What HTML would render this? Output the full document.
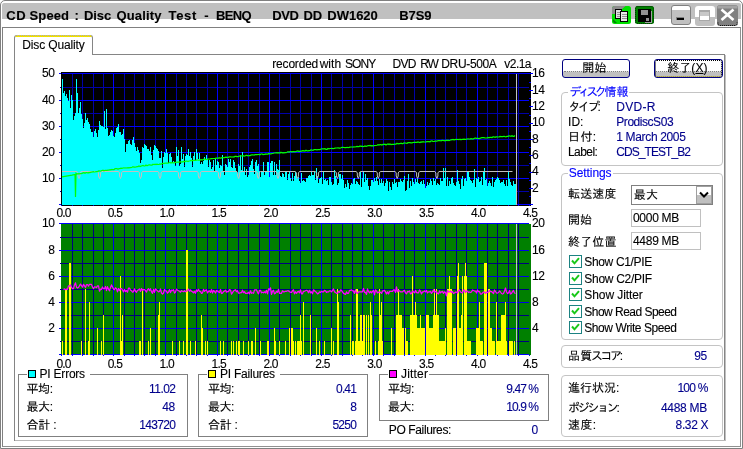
<!DOCTYPE html>
<html lang="ja"><head><meta charset="utf-8"><title>CD Speed : Disc Quality Test</title>
<style>
html,body{margin:0;padding:0;background:#fff;}
body{width:743px;height:449px;position:relative;overflow:hidden;font-family:"Liberation Sans","IPAGothic","Noto Sans CJK JP",sans-serif;font-size:12px;}
.t{position:absolute;white-space:pre;line-height:16px;font-size:12px;-webkit-text-stroke:0.12px currentColor;}
.b{position:absolute;box-sizing:border-box;}
.tx{position:absolute;left:0;top:0;width:743px;height:449px;will-change:transform;}
.ch{position:absolute;left:0;top:0;}
.gb{position:absolute;box-sizing:border-box;border:1px solid #c4c4c4;border-radius:4px;}
.gs{position:absolute;box-sizing:border-box;border:1px solid #808080;}
.lg{position:absolute;background:#fff;height:3px;}
.ed{position:absolute;box-sizing:border-box;border:1px solid #c8c8c8;border-top-color:#b0b0b0;border-left-color:#b0b0b0;background:#fff;}
.cb{position:absolute;box-sizing:border-box;width:13px;height:13px;border:1px solid #1c8a8a;background:#fff;}
</style></head>
<body>
<div class="b" style="left:0px;top:0px;width:743px;height:449px;border:1px solid #808080;border-radius:5px 5px 0 0;"></div>
<div class="b" style="left:2px;top:3px;width:739px;height:16px;background:#c0c0c0;border-radius:2px 2px 0 0;"></div>
<div class="b" style="left:2px;top:27px;width:739px;height:420px;border:1px solid #808080;border-right-color:#909090;border-bottom-color:#909090;"></div>
<svg class="ch" style="left:611px;top:5px" width="44" height="20" viewBox="0 0 44 20"><rect x="1" y="1" width="19" height="18" rx="2.5" fill="#00e000"/><path d="M1,3.5a2.500,2.500 0 0 1 2.500,-2.500h11l-9,8h-4.500z" fill="#8c8c8c"/><path d="M2,14l4,4h-2a2,2 0 0 1 -2,-2z" fill="#008000"/><rect x="4.500" y="4.500" width="6" height="9" fill="#e0e0e0" stroke="#000" stroke-width="1"/><rect x="9.500" y="6.500" width="7" height="10" fill="#e8e8e8" stroke="#000" stroke-width="1"/><path d="M6,7.500h3M6,9.500h3M6,11.500h3M11,9.500h5M11,11.500h5M11,13.500h5" stroke="#909090" stroke-width="1" fill="none"/><rect x="24" y="1" width="19" height="18" rx="2.500" fill="#008000"/><rect x="24.500" y="1.500" width="18" height="17" rx="2" fill="none" stroke="#003000" stroke-width="1" stroke-dasharray="1,1"/><rect x="27" y="4" width="13" height="13" fill="#000"/><rect x="30" y="5" width="7" height="5" fill="#909090"/><rect x="35" y="13" width="3" height="3" fill="#909090"/><rect x="40" y="6" width="1" height="12" fill="#a0a0a0"/><rect x="34" y="17" width="7" height="1" fill="#a0a0a0"/></svg>
<div class="b" style="left:671px;top:5px;width:20px;height:20px;border:1px solid #808080;border-radius:3px;background:linear-gradient(#fff 0,#fff 4px,#c0c0c0 4px,#c0c0c0 100%);"></div>
<div class="b" style="left:676px;top:17px;width:8px;height:3px;background:#000;border-top:1px solid #808080;border-left:1px solid #808080;"></div>
<div class="b" style="left:695px;top:6px;width:20px;height:20px;border-radius:3px;background:linear-gradient(#fff 0,#fff 11px,#c0c0c0 11px,#c0c0c0 100%);"></div>
<div class="b" style="left:699px;top:10px;width:11px;height:11px;border:1px solid #a8a8a8;border-top:2px solid #a8a8a8;background:linear-gradient(#c8c8c8 0,#c8c8c8 4px,#fff 4px,#fff 100%);"></div>
<svg class="ch" style="left:717px;top:5px" width="21" height="21" viewBox="0 0 21 21"><rect x="0" y="0" width="21" height="21" rx="3" fill="#808080"/><path d="M2,0.500h17a2,2 0 0 1 1.500,1.500v1.500h-20v-1.500a2,2 0 0 1 1.500,-1.500z" fill="#a4a4a4"/><path d="M4.500,4.500L16.500,15M16.500,4.500L4.500,15" stroke="#fff" stroke-width="2.600" fill="none"/><path d="M1,17.500v1a2,2 0 0 0 2,2h15a2,2 0 0 0 2,-2v-1" stroke="#000" stroke-width="1" stroke-dasharray="1,1" fill="none"/></svg>
<div class="b" style="left:14px;top:54px;width:711px;height:387px;border:1px solid #858585;"></div>
<div class="b" style="left:15px;top:440px;width:711px;height:1px;background:#b8b8b8;"></div>
<div class="b" style="left:725px;top:55px;width:1px;height:386px;background:#c0c0c0;"></div>
<div class="b" style="left:14px;top:35px;width:79px;height:20px;border:1px solid #858585;border-bottom:none;border-radius:3px 3px 0 0;background:#fff;"></div>
<div class="b" style="left:15px;top:35px;width:77px;height:2px;background:#f0e000;border-radius:3px 3px 0 0;border-top:1px dotted #a8a8c0;"></div>
<div class="b" style="left:562px;top:59px;width:68px;height:19px;border:1px solid #000080;border-radius:3px;background:linear-gradient(#fff 0,#fff 11px,#c0c0c0 12px,#c0c0c0 100%);"></div>
<div class="b" style="left:564px;top:71px;width:64px;height:1px;border-top:1px dotted #808080;"></div>
<div class="b" style="left:654px;top:59px;width:69px;height:19px;border:1px solid #000080;border-radius:3px;background:linear-gradient(#fff 0,#fff 11px,#c0c0c0 12px,#c0c0c0 100%);"></div>
<div class="b" style="left:656px;top:71px;width:65px;height:1px;border-top:1px dotted #808080;"></div>
<div class="b" style="left:655px;top:60px;width:67px;height:17px;border:1px dotted #000;border-bottom-color:#a09000;border-radius:2px;"></div>
<div class="gb" style="left:561px;top:92px;width:162px;height:74px;"></div>
<div class="lg" style="left:568px;top:91px;width:61px;"></div>
<div class="gb" style="left:561px;top:173px;width:162px;height:167px;"></div>
<div class="lg" style="left:568px;top:172px;width:45px;"></div>
<div class="gb" style="left:561px;top:345px;width:162px;height:23px;"></div>
<div class="gb" style="left:561px;top:375px;width:162px;height:62px;"></div>
<div class="b" style="left:631px;top:185px;width:82px;height:20px;border:1px solid #808080;background:#fff;"></div>
<div class="b" style="left:696px;top:186px;width:16px;height:18px;border:1px solid #a0a0a0;background:linear-gradient(#fff 0,#fff 8px,#c0c0c0 8px,#c0c0c0 100%);"></div>
<svg class="ch" style="left:699px;top:191px" width="10" height="8" viewBox="0 0 10 8"><path d="M1,1.500L5,5.500L9,1.500" stroke="#000" stroke-width="2" fill="none"/></svg>
<div class="b" style="left:631px;top:209px;width:70px;height:18px;border:1px solid #c0c0c0;background:#fff;"></div>
<div class="b" style="left:631px;top:232px;width:70px;height:18px;border:1px solid #c0c0c0;background:#fff;"></div>
<div class="b" style="left:569px;top:255px;width:13px;height:13px;border:1px solid #1c8282;background:#fff;"></div>
<svg class="ch" style="left:571px;top:257px" width="9" height="9" viewBox="0 0 9 9"><path d="M1,3.500L3.500,6.300L8,1.200" stroke="#18c818" stroke-width="2" fill="none"/></svg>
<div class="b" style="left:569px;top:272px;width:13px;height:13px;border:1px solid #1c8282;background:#fff;"></div>
<svg class="ch" style="left:571px;top:274px" width="9" height="9" viewBox="0 0 9 9"><path d="M1,3.500L3.500,6.300L8,1.200" stroke="#18c818" stroke-width="2" fill="none"/></svg>
<div class="b" style="left:569px;top:288px;width:13px;height:13px;border:1px solid #1c8282;background:#fff;"></div>
<svg class="ch" style="left:571px;top:290px" width="9" height="9" viewBox="0 0 9 9"><path d="M1,3.500L3.500,6.300L8,1.200" stroke="#18c818" stroke-width="2" fill="none"/></svg>
<div class="b" style="left:569px;top:305px;width:13px;height:13px;border:1px solid #1c8282;background:#fff;"></div>
<svg class="ch" style="left:571px;top:307px" width="9" height="9" viewBox="0 0 9 9"><path d="M1,3.500L3.500,6.300L8,1.200" stroke="#18c818" stroke-width="2" fill="none"/></svg>
<div class="b" style="left:569px;top:321px;width:13px;height:13px;border:1px solid #1c8282;background:#fff;"></div>
<svg class="ch" style="left:571px;top:323px" width="9" height="9" viewBox="0 0 9 9"><path d="M1,3.500L3.500,6.300L8,1.200" stroke="#18c818" stroke-width="2" fill="none"/></svg>
<div class="gs" style="left:18px;top:374px;width:170px;height:63px;"></div>
<div class="lg" style="left:27px;top:373px;width:63px;"></div>
<div class="gs" style="left:198px;top:374px;width:170px;height:63px;"></div>
<div class="lg" style="left:207px;top:373px;width:73px;"></div>
<div class="gs" style="left:379px;top:374px;width:170px;height:47px;"></div>
<div class="lg" style="left:388px;top:373px;width:41px;"></div>
<div class="b" style="left:28px;top:370px;width:8px;height:8px;border:1px solid #000;background:#00ffff;"></div>
<div class="b" style="left:208px;top:370px;width:8px;height:8px;border:1px solid #000;background:#ffff00;"></div>
<div class="b" style="left:389px;top:370px;width:8px;height:8px;border:1px solid #000;background:#ff00ff;"></div>
<svg class="ch" width="743" height="449" viewBox="0 0 743 449" shape-rendering="crispEdges">
<rect x="61" y="72" width="470" height="134" fill="#000"/>
<rect x="72" y="74" width="1" height="131" fill="#0000a8"/>
<rect x="82" y="74" width="1" height="131" fill="#0000a8"/>
<rect x="93" y="74" width="1" height="131" fill="#0000a8"/>
<rect x="103" y="74" width="1" height="131" fill="#0000a8"/>
<rect x="124" y="74" width="1" height="131" fill="#0000a8"/>
<rect x="134" y="74" width="1" height="131" fill="#0000a8"/>
<rect x="144" y="74" width="1" height="131" fill="#0000a8"/>
<rect x="155" y="74" width="1" height="131" fill="#0000a8"/>
<rect x="176" y="74" width="1" height="131" fill="#0000a8"/>
<rect x="186" y="74" width="1" height="131" fill="#0000a8"/>
<rect x="196" y="74" width="1" height="131" fill="#0000a8"/>
<rect x="207" y="74" width="1" height="131" fill="#0000a8"/>
<rect x="227" y="74" width="1" height="131" fill="#0000a8"/>
<rect x="238" y="74" width="1" height="131" fill="#0000a8"/>
<rect x="248" y="74" width="1" height="131" fill="#0000a8"/>
<rect x="259" y="74" width="1" height="131" fill="#0000a8"/>
<rect x="279" y="74" width="1" height="131" fill="#0000a8"/>
<rect x="290" y="74" width="1" height="131" fill="#0000a8"/>
<rect x="300" y="74" width="1" height="131" fill="#0000a8"/>
<rect x="311" y="74" width="1" height="131" fill="#0000a8"/>
<rect x="331" y="74" width="1" height="131" fill="#0000a8"/>
<rect x="342" y="74" width="1" height="131" fill="#0000a8"/>
<rect x="352" y="74" width="1" height="131" fill="#0000a8"/>
<rect x="362" y="74" width="1" height="131" fill="#0000a8"/>
<rect x="383" y="74" width="1" height="131" fill="#0000a8"/>
<rect x="394" y="74" width="1" height="131" fill="#0000a8"/>
<rect x="404" y="74" width="1" height="131" fill="#0000a8"/>
<rect x="414" y="74" width="1" height="131" fill="#0000a8"/>
<rect x="435" y="74" width="1" height="131" fill="#0000a8"/>
<rect x="445" y="74" width="1" height="131" fill="#0000a8"/>
<rect x="456" y="74" width="1" height="131" fill="#0000a8"/>
<rect x="466" y="74" width="1" height="131" fill="#0000a8"/>
<rect x="487" y="74" width="1" height="131" fill="#0000a8"/>
<rect x="497" y="74" width="1" height="131" fill="#0000a8"/>
<rect x="508" y="74" width="1" height="131" fill="#0000a8"/>
<rect x="518" y="74" width="1" height="131" fill="#0000a8"/>
<rect x="60" y="191" width="469" height="1" fill="#0000a8"/>
<rect x="60" y="165" width="469" height="1" fill="#0000a8"/>
<rect x="60" y="139" width="469" height="1" fill="#0000a8"/>
<rect x="60" y="113" width="469" height="1" fill="#0000a8"/>
<rect x="60" y="87" width="469" height="1" fill="#0000a8"/>
<rect x="113" y="74" width="1" height="131" fill="#0000ff"/>
<rect x="165" y="74" width="1" height="131" fill="#0000ff"/>
<rect x="217" y="74" width="1" height="131" fill="#0000ff"/>
<rect x="269" y="74" width="1" height="131" fill="#0000ff"/>
<rect x="321" y="74" width="1" height="131" fill="#0000ff"/>
<rect x="373" y="74" width="1" height="131" fill="#0000ff"/>
<rect x="425" y="74" width="1" height="131" fill="#0000ff"/>
<rect x="477" y="74" width="1" height="131" fill="#0000ff"/>
<rect x="59" y="178" width="470" height="1" fill="#0000ff"/>
<rect x="59" y="152" width="470" height="1" fill="#0000ff"/>
<rect x="59" y="126" width="470" height="1" fill="#0000ff"/>
<rect x="59" y="100" width="470" height="1" fill="#0000ff"/>
<rect x="59" y="73" width="474" height="1" fill="#0000ff"/>
<rect x="59" y="204" width="474" height="1" fill="#0000ff"/>
<rect x="529" y="204" width="4" height="1" fill="#0000ff"/>
<rect x="529" y="196" width="2" height="1" fill="#0000ff"/>
<rect x="529" y="188" width="4" height="1" fill="#0000ff"/>
<rect x="529" y="180" width="2" height="1" fill="#0000ff"/>
<rect x="529" y="172" width="4" height="1" fill="#0000ff"/>
<rect x="529" y="163" width="2" height="1" fill="#0000ff"/>
<rect x="529" y="155" width="4" height="1" fill="#0000ff"/>
<rect x="529" y="147" width="2" height="1" fill="#0000ff"/>
<rect x="529" y="139" width="4" height="1" fill="#0000ff"/>
<rect x="529" y="131" width="2" height="1" fill="#0000ff"/>
<rect x="529" y="123" width="4" height="1" fill="#0000ff"/>
<rect x="529" y="115" width="2" height="1" fill="#0000ff"/>
<rect x="529" y="106" width="4" height="1" fill="#0000ff"/>
<rect x="529" y="98" width="2" height="1" fill="#0000ff"/>
<rect x="529" y="90" width="4" height="1" fill="#0000ff"/>
<rect x="529" y="82" width="2" height="1" fill="#0000ff"/>
<path d="M62,205V79h1V93h1V91h1V96h1V94h1V98h1V101h1V90h1V108h1V95h1V100h1V120h1V116h1V113h1V79h1V93h1V113h1V108h1V102h1V114h1V119h1V128h1V123h1V113h1V120h1V118h1V122h1V124h1V129h1V132h1V132h1V137h1V131h1V129h1V133h1V137h1V130h1V121h1V125h1V126h1V126h1V127h1V111h1V129h1V109h1V128h1V136h1V135h1V132h1V130h1V131h1V136h1V137h1V133h1V128h1V127h1V124h1V132h1V132h1V135h1V134h1V129h1V139h1V152h1V144h1V144h1V141h1V140h1V144h1V145h1V140h1V137h1V143h1V147h1V151h1V147h1V150h1V153h1V163h1V160h1V147h1V148h1V144h1V145h1V146h1V149h1V149h1V151h1V147h1V155h1V160h1V150h1V145h1V146h1V148h1V149h1V151h1V158h1V158h1V151h1V168h1V157h1V152h1V153h1V149h1V153h1V163h1V154h1V153h1V157h1V163h1V161h1V162h1V166h1V147h1V156h1V150h1V166h1V164h1V147h1V159h1V154h1V167h1V156h1V154h1V155h1V149h1V156h1V152h1V158h1V167h1V156h1V152h1V160h1V149h1V153h1V159h1V153h1V164h1V162h1V164h1V161h1V157h1V159h1V155h1V159h1V167h1V160h1V162h1V169h1V167h1V160h1V172h1V158h1V165h1V161h1V162h1V168h1V165h1V166h1V155h1V172h1V175h1V164h1V165h1V167h1V159h1V162h1V159h1V167h1V168h1V160h1V162h1V168h1V171h1V174h1V164h1V166h1V155h1V170h1V152h1V171h1V167h1V175h1V169h1V177h1V175h1V167h1V165h1V161h1V159h1V169h1V174h1V162h1V160h1V166h1V164h1V171h1V177h1V171h1V171h1V162h1V175h1V171h1V171h1V162h1V162h1V177h1V163h1V161h1V161h1V175h1V162h1V175h1V164h1V169h1V170h1V160h1V176h1V177h1V173h1V174h1V177h1V172h1V172h1V180h1V174h1V172h1V178h1V181h1V173h1V181h1V176h1V172h1V175h1V179h1V177h1V181h1V183h1V173h1V181h1V180h1V181h1V182h1V178h1V178h1V176h1V175h1V176h1V172h1V175h1V175h1V171h1V180h1V168h1V176h1V183h1V179h1V178h1V177h1V184h1V171h1V180h1V179h1V181h1V180h1V185h1V177h1V177h1V182h1V185h1V184h1V170h1V176h1V179h1V185h1V183h1V174h1V174h1V179h1V175h1V180h1V188h1V184h1V187h1V180h1V183h1V189h1V185h1V183h1V184h1V179h1V178h1V184h1V181h1V182h1V184h1V185h1V172h1V187h1V178h1V171h1V182h1V174h1V180h1V178h1V186h1V190h1V186h1V180h1V180h1V182h1V178h1V181h1V177h1V181h1V185h1V179h1V183h1V179h1V183h1V181h1V186h1V183h1V179h1V181h1V191h1V182h1V187h1V190h1V182h1V184h1V179h1V183h1V182h1V187h1V182h1V182h1V179h1V181h1V182h1V180h1V176h1V191h1V190h1V181h1V174h1V188h1V181h1V186h1V178h1V182h1V184h1V179h1V182h1V179h1V183h1V184h1V182h1V181h1V184h1V180h1V184h1V188h1V186h1V182h1V185h1V183h1V179h1V181h1V185h1V178h1V181h1V179h1V185h1V183h1V184h1V185h1V178h1V181h1V181h1V168h1V178h1V168h1V186h1V177h1V186h1V181h1V184h1V178h1V177h1V183h1V185h1V186h1V182h1V170h1V181h1V184h1V189h1V179h1V176h1V186h1V179h1V178h1V181h1V172h1V171h1V177h1V180h1V181h1V183h1V180h1V169h1V187h1V178h1V179h1V177h1V182h1V181h1V177h1V185h1V172h1V168h1V180h1V179h1V186h1V183h1V181h1V183h1V186h1V177h1V187h1V182h1V180h1V179h1V177h1V178h1V180h1V183h1V182h1V182h1V180h1V184h1V186h1V180h1V186h1V172h1V179h1V182h1V185h1V186h1V181h1V184h1V184h1V181h1V205Z" fill="#00ffff"/>
<rect x="61" y="72" width="1" height="134" fill="#000"/>
<rect x="61" y="205" width="470" height="1" fill="#000"/>
<rect x="61" y="205" width="1" height="1" fill="#0000e0"/>
<rect x="72" y="205" width="1" height="1" fill="#0000e0"/>
<rect x="82" y="205" width="1" height="1" fill="#0000e0"/>
<rect x="93" y="205" width="1" height="1" fill="#0000e0"/>
<rect x="103" y="205" width="1" height="1" fill="#0000e0"/>
<rect x="113" y="205" width="1" height="1" fill="#0000e0"/>
<rect x="124" y="205" width="1" height="1" fill="#0000e0"/>
<rect x="134" y="205" width="1" height="1" fill="#0000e0"/>
<rect x="144" y="205" width="1" height="1" fill="#0000e0"/>
<rect x="155" y="205" width="1" height="1" fill="#0000e0"/>
<rect x="165" y="205" width="1" height="1" fill="#0000e0"/>
<rect x="176" y="205" width="1" height="1" fill="#0000e0"/>
<rect x="186" y="205" width="1" height="1" fill="#0000e0"/>
<rect x="196" y="205" width="1" height="1" fill="#0000e0"/>
<rect x="207" y="205" width="1" height="1" fill="#0000e0"/>
<rect x="217" y="205" width="1" height="1" fill="#0000e0"/>
<rect x="227" y="205" width="1" height="1" fill="#0000e0"/>
<rect x="238" y="205" width="1" height="1" fill="#0000e0"/>
<rect x="248" y="205" width="1" height="1" fill="#0000e0"/>
<rect x="259" y="205" width="1" height="1" fill="#0000e0"/>
<rect x="269" y="205" width="1" height="1" fill="#0000e0"/>
<rect x="279" y="205" width="1" height="1" fill="#0000e0"/>
<rect x="290" y="205" width="1" height="1" fill="#0000e0"/>
<rect x="300" y="205" width="1" height="1" fill="#0000e0"/>
<rect x="311" y="205" width="1" height="1" fill="#0000e0"/>
<rect x="321" y="205" width="1" height="1" fill="#0000e0"/>
<rect x="331" y="205" width="1" height="1" fill="#0000e0"/>
<rect x="342" y="205" width="1" height="1" fill="#0000e0"/>
<rect x="352" y="205" width="1" height="1" fill="#0000e0"/>
<rect x="362" y="205" width="1" height="1" fill="#0000e0"/>
<rect x="373" y="205" width="1" height="1" fill="#0000e0"/>
<rect x="383" y="205" width="1" height="1" fill="#0000e0"/>
<rect x="394" y="205" width="1" height="1" fill="#0000e0"/>
<rect x="404" y="205" width="1" height="1" fill="#0000e0"/>
<rect x="414" y="205" width="1" height="1" fill="#0000e0"/>
<rect x="425" y="205" width="1" height="1" fill="#0000e0"/>
<rect x="435" y="205" width="1" height="1" fill="#0000e0"/>
<rect x="445" y="205" width="1" height="1" fill="#0000e0"/>
<rect x="456" y="205" width="1" height="1" fill="#0000e0"/>
<rect x="466" y="205" width="1" height="1" fill="#0000e0"/>
<rect x="477" y="205" width="1" height="1" fill="#0000e0"/>
<rect x="487" y="205" width="1" height="1" fill="#0000e0"/>
<rect x="497" y="205" width="1" height="1" fill="#0000e0"/>
<rect x="508" y="205" width="1" height="1" fill="#0000e0"/>
<rect x="518" y="205" width="1" height="1" fill="#0000e0"/>
<rect x="529" y="205" width="1" height="1" fill="#0000e0"/>
<path d="M62,171.5L77.0,171.5L78.0,173L78.0,176L79.0,178.5L80.0,176L80.0,173L81.0,171.5L97.5,171.5L98.5,173L98.5,176L99.5,178.5L100.5,176L100.5,173L101.5,171.5L118.5,171.5L119.5,173L119.5,176L120.5,178.5L121.5,176L121.5,173L122.5,171.5L138.5,171.5L139.5,173L139.5,176L140.5,178.5L141.5,176L141.5,173L142.5,171.5L158.0,171.5L159.0,173L159.0,176L160.0,178.5L161.0,176L161.0,173L162.0,171.5L177.5,171.5L178.5,173L178.5,176L179.5,178.5L180.5,176L180.5,173L181.5,171.5L197.3,171.5L198.3,173L198.3,176L199.3,178.5L200.3,176L200.3,173L201.3,171.5L217.5,171.5L218.5,173L218.5,176L219.5,178.5L220.5,176L220.5,173L221.5,171.5L236.6,171.5L237.6,173L237.6,176L238.6,178.5L239.6,176L239.6,173L240.6,171.5L256.3,171.5L257.3,173L257.3,176L258.3,178.5L259.3,176L259.3,173L260.3,171.5L276.0,171.5L277.0,173L277.0,176L278.0,178.5L279.0,176L279.0,173L280.0,171.5L295.4,171.5L296.4,173L296.4,176L297.4,178.5L298.4,176L298.4,173L299.4,171.5L315.4,171.5L316.4,173L316.4,176L317.4,178.5L318.4,176L318.4,173L319.4,171.5L335.4,171.5L336.4,173L336.4,176L337.4,178.5L338.4,176L338.4,173L339.4,171.5L356.3,171.5L357.3,173L357.3,176L358.3,178.5L359.3,176L359.3,173L360.3,171.5L376.3,171.5L377.3,173L377.3,176L378.3,178.5L379.3,176L379.3,173L380.3,171.5L395.2,171.5L396.2,173L396.2,176L397.2,178.5L398.2,176L398.2,173L399.2,171.5L415.6,171.5L416.6,173L416.6,176L417.6,178.5L418.6,176L418.6,173L419.6,171.5L434.9,171.5L435.9,173L435.9,176L436.9,178.5L437.9,176L437.9,173L438.9,171.5L512.5,171.5" fill="none" stroke="#c0c0c0" stroke-width="1" shape-rendering="auto"/>
<path d="M62,176.8L72,175.1L75,174.4L75.5,197L76,173.2L77,174.1L78,173.7L79,173.9L80,173.6L81,173.6L82,173.5L83,172.9L84,172.7L85,173.3L86,172.6L87,172.5L88,173.0L89,172.4L90,172.6L91,172.1L92,172.2L93,171.6L94,171.9L95,172.0L96,171.5L97,171.6L98,171.4L99,170.7L100,171.2L101,170.9L102,170.5L103,170.2L104,170.8L105,170.3L106,170.4L107,170.4L108,170.2L109,170.2L110,169.6L111,169.9L112,169.4L113,169.7L114,169.6L115,168.7L116,168.7L117,168.6L118,169.2L119,168.6L120,168.6L121,168.2L122,168.3L123,168.0L124,167.9L125,168.0L126,167.9L127,168.0L128,167.7L129,167.8L130,167.6L131,167.6L132,167.2L133,166.7L134,167.2L135,167.2L136,167.0L137,166.6L138,166.6L139,166.0L140,166.5L141,166.1L142,165.7L143,165.4L144,166.0L145,166.0L146,165.1L147,165.7L148,165.2L149,164.9L150,164.9L151,165.2L152,165.2L153,164.3L154,164.7L155,164.1L156,164.6L157,164.1L158,164.5L159,164.5L160,164.0L161,164.3L162,163.6L163,163.3L164,163.6L165,163.0L166,163.1L167,163.2L168,163.2L169,162.7L170,162.5L171,163.1L172,162.5L173,163.0L174,162.9L175,162.3L176,162.3L177,162.2L178,162.2L179,162.1L180,161.9L181,161.9L182,162.1L183,161.6L184,161.4L185,161.6L186,161.1L187,161.0L188,161.5L189,161.0L190,160.9L191,160.4L192,160.6L193,160.7L194,160.1L195,160.5L196,160.4L197,159.8L198,160.2L199,160.0L200,160.1L201,159.7L202,159.9L203,159.8L204,159.1L205,159.0L206,159.5L207,159.7L208,158.9L209,159.0L210,159.0L211,158.7L212,158.6L213,158.5L214,158.5L215,158.6L216,158.2L217,158.2L218,158.4L219,157.7L220,158.1L221,158.1L222,157.7L223,157.5L224,157.9L225,157.3L226,157.2L227,157.3L228,157.5L229,156.8L230,156.9L231,156.8L232,157.2L233,156.8L234,157.0L235,156.3L236,156.4L237,156.6L238,156.7L239,156.2L240,155.9L241,155.8L242,156.0L243,155.6L244,156.1L245,156.0L246,155.4L247,155.4L248,155.8L249,155.5L250,155.6L251,155.1L252,154.8L253,154.8L254,155.2L255,154.7L256,154.6L257,154.6L258,154.5L259,154.4L260,154.8L261,154.0L262,153.8L263,154.6L264,154.4L265,154.4L266,153.9L267,154.2L268,154.1L269,153.4L270,153.8L271,153.8L272,153.5L273,153.3L274,153.0L275,153.0L276,152.8L277,152.6L278,153.0L279,152.6L280,153.0L281,152.2L282,152.9L283,152.7L284,152.8L285,152.7L286,152.6L287,152.2L288,151.6L289,152.2L290,151.6L291,151.6L292,151.9L293,151.7L294,151.5L295,151.9L296,151.5L297,151.2L298,151.0L299,151.5L300,151.1L301,151.3L302,150.8L303,150.6L304,150.8L305,151.0L306,150.3L307,150.8L308,150.8L309,150.6L310,150.6L311,149.8L312,150.2L313,150.4L314,149.6L315,149.7L316,149.6L317,149.8L318,149.6L319,149.5L320,149.7L321,149.0L322,148.9L323,148.9L324,148.8L325,148.7L326,149.4L327,149.3L328,148.5L329,148.8L330,148.5L331,148.5L332,148.4L333,148.6L334,148.5L335,148.2L336,148.0L337,148.0L338,147.8L339,148.1L340,148.1L341,147.8L342,147.4L343,147.4L344,147.5L345,147.7L346,147.7L347,147.3L348,147.6L349,147.4L350,147.1L351,147.0L352,147.0L353,147.1L354,146.8L355,147.0L356,146.7L357,146.4L358,146.6L359,146.7L360,146.0L361,146.3L362,146.2L363,146.6L364,146.5L365,145.9L366,146.3L367,146.2L368,145.6L369,145.7L370,145.4L371,145.9L372,145.7L373,145.8L374,145.7L375,145.5L376,145.5L377,145.2L378,144.7L379,145.1L380,144.5L381,144.6L382,145.1L383,144.3L384,144.3L385,144.2L386,144.9L387,144.2L388,144.0L389,144.6L390,143.9L391,144.5L392,144.3L393,144.3L394,144.4L395,144.0L396,144.1L397,143.3L398,143.9L399,143.6L400,143.7L401,143.1L402,143.6L403,143.7L404,142.8L405,143.0L406,143.2L407,143.3L408,142.7L409,142.6L410,142.6L411,142.9L412,142.9L413,142.5L414,142.4L415,142.4L416,142.3L417,142.3L418,141.9L419,142.2L420,142.5L421,142.0L422,142.2L423,141.6L424,142.0L425,142.0L426,141.9L427,141.7L428,141.6L429,141.6L430,141.8L431,141.0L432,140.9L433,141.5L434,141.5L435,141.1L436,141.0L437,141.2L438,140.6L439,140.6L440,140.5L441,140.8L442,140.4L443,140.3L444,140.7L445,140.8L446,140.2L447,140.5L448,140.1L449,140.5L450,140.2L451,139.8L452,139.7L453,139.4L454,139.8L455,139.6L456,139.4L457,139.5L458,139.4L459,139.7L460,139.1L461,139.8L462,139.3L463,139.3L464,139.1L465,139.4L466,139.3L467,139.0L468,138.9L469,139.0L470,139.1L471,138.6L472,138.8L473,139.0L474,138.5L475,138.2L476,138.1L477,138.5L478,138.4L479,138.6L480,138.4L481,137.8L482,137.7L483,137.7L484,137.6L485,138.0L486,138.0L487,138.0L488,137.4L489,137.8L490,137.3L491,137.3L492,137.5L493,136.9L494,136.8L495,137.4L496,136.9L497,136.9L498,137.0L499,137.0L500,136.4L501,136.6L502,136.6L503,136.6L504,136.3L505,136.6L506,136.8L507,136.3L508,136.3L509,135.9L510,136.0L511,136.3L512,135.7L513,136.3L514,136.3L515,135.5" fill="none" stroke="#00ff00" stroke-width="1.2" shape-rendering="auto"/>
<rect x="516" y="74" width="1" height="131" fill="#c0c0c0"/>
<rect x="61" y="224" width="470" height="131" fill="#008000"/>
<rect x="72" y="224" width="1" height="131" fill="#000080"/>
<rect x="82" y="224" width="1" height="131" fill="#000080"/>
<rect x="93" y="224" width="1" height="131" fill="#000080"/>
<rect x="103" y="224" width="1" height="131" fill="#000080"/>
<rect x="124" y="224" width="1" height="131" fill="#000080"/>
<rect x="134" y="224" width="1" height="131" fill="#000080"/>
<rect x="144" y="224" width="1" height="131" fill="#000080"/>
<rect x="155" y="224" width="1" height="131" fill="#000080"/>
<rect x="176" y="224" width="1" height="131" fill="#000080"/>
<rect x="186" y="224" width="1" height="131" fill="#000080"/>
<rect x="196" y="224" width="1" height="131" fill="#000080"/>
<rect x="207" y="224" width="1" height="131" fill="#000080"/>
<rect x="227" y="224" width="1" height="131" fill="#000080"/>
<rect x="238" y="224" width="1" height="131" fill="#000080"/>
<rect x="248" y="224" width="1" height="131" fill="#000080"/>
<rect x="259" y="224" width="1" height="131" fill="#000080"/>
<rect x="279" y="224" width="1" height="131" fill="#000080"/>
<rect x="290" y="224" width="1" height="131" fill="#000080"/>
<rect x="300" y="224" width="1" height="131" fill="#000080"/>
<rect x="311" y="224" width="1" height="131" fill="#000080"/>
<rect x="331" y="224" width="1" height="131" fill="#000080"/>
<rect x="342" y="224" width="1" height="131" fill="#000080"/>
<rect x="352" y="224" width="1" height="131" fill="#000080"/>
<rect x="362" y="224" width="1" height="131" fill="#000080"/>
<rect x="383" y="224" width="1" height="131" fill="#000080"/>
<rect x="394" y="224" width="1" height="131" fill="#000080"/>
<rect x="404" y="224" width="1" height="131" fill="#000080"/>
<rect x="414" y="224" width="1" height="131" fill="#000080"/>
<rect x="435" y="224" width="1" height="131" fill="#000080"/>
<rect x="445" y="224" width="1" height="131" fill="#000080"/>
<rect x="456" y="224" width="1" height="131" fill="#000080"/>
<rect x="466" y="224" width="1" height="131" fill="#000080"/>
<rect x="487" y="224" width="1" height="131" fill="#000080"/>
<rect x="497" y="224" width="1" height="131" fill="#000080"/>
<rect x="508" y="224" width="1" height="131" fill="#000080"/>
<rect x="518" y="224" width="1" height="131" fill="#000080"/>
<rect x="60" y="341" width="469" height="1" fill="#000080"/>
<rect x="60" y="315" width="469" height="1" fill="#000080"/>
<rect x="60" y="289" width="469" height="1" fill="#000080"/>
<rect x="60" y="263" width="469" height="1" fill="#000080"/>
<rect x="60" y="237" width="469" height="1" fill="#000080"/>
<rect x="113" y="224" width="1" height="131" fill="#0000e8"/>
<rect x="165" y="224" width="1" height="131" fill="#0000e8"/>
<rect x="217" y="224" width="1" height="131" fill="#0000e8"/>
<rect x="269" y="224" width="1" height="131" fill="#0000e8"/>
<rect x="321" y="224" width="1" height="131" fill="#0000e8"/>
<rect x="373" y="224" width="1" height="131" fill="#0000e8"/>
<rect x="425" y="224" width="1" height="131" fill="#0000e8"/>
<rect x="477" y="224" width="1" height="131" fill="#0000e8"/>
<rect x="59" y="328" width="470" height="1" fill="#0000e8"/>
<rect x="59" y="302" width="470" height="1" fill="#0000e8"/>
<rect x="59" y="276" width="470" height="1" fill="#0000e8"/>
<rect x="59" y="250" width="470" height="1" fill="#0000e8"/>
<rect x="59" y="223" width="470" height="1" fill="#0000ff"/>
<rect x="59" y="354" width="470" height="1" fill="#0000ff"/>
<path d="M62,341V355h1V341ZM65,289V355h1V289ZM66,289V355h1V289ZM69,263V355h1V263ZM70,263V355h1V263ZM81,341V355h1V341ZM85,289V355h1V289ZM88,341V355h1V341ZM89,302V355h1V302ZM97,328V355h1V328ZM101,341V355h1V341ZM103,315V355h1V315ZM120,276V355h1V276ZM121,341V355h1V341ZM122,315V355h1V315ZM139,341V355h1V341ZM140,341V355h1V341ZM142,289V355h1V289ZM148,341V355h1V341ZM150,328V355h1V328ZM158,315V355h1V315ZM159,302V355h1V302ZM172,341V355h1V341ZM179,341V355h1V341ZM183,341V355h1V341ZM186,250V355h1V250ZM187,250V355h1V250ZM190,341V355h1V341ZM195,341V355h1V341ZM201,315V355h1V315ZM202,328V355h1V328ZM205,341V355h1V341ZM207,341V355h1V341ZM220,341V355h1V341ZM223,341V355h1V341ZM231,341V355h1V341ZM233,341V355h1V341ZM236,341V355h1V341ZM238,341V355h1V341ZM239,341V355h1V341ZM243,341V355h1V341ZM248,341V355h1V341ZM251,341V355h1V341ZM252,341V355h1V341ZM255,328V355h1V328ZM260,341V355h1V341ZM267,341V355h1V341ZM268,341V355h1V341ZM274,328V355h1V328ZM275,341V355h1V341ZM279,341V355h1V341ZM285,341V355h1V341ZM289,328V355h1V328ZM291,328V355h1V328ZM292,328V355h1V328ZM293,341V355h1V341ZM295,341V355h1V341ZM297,341V355h1V341ZM298,341V355h1V341ZM299,341V355h1V341ZM300,315V355h1V315ZM301,341V355h1V341ZM303,302V355h1V302ZM310,315V355h1V315ZM316,328V355h1V328ZM319,341V355h1V341ZM324,341V355h1V341ZM331,328V355h1V328ZM333,341V355h1V341ZM337,289V355h1V289ZM338,302V355h1V302ZM350,315V355h1V315ZM352,341V355h1V341ZM353,341V355h1V341ZM355,341V355h1V341ZM356,289V355h1V289ZM357,289V355h1V289ZM358,341V355h1V341ZM359,341V355h1V341ZM360,315V355h1V315ZM361,315V355h1V315ZM362,341V355h1V341ZM363,315V355h1V315ZM364,315V355h1V315ZM366,315V355h1V315ZM368,315V355h1V315ZM370,302V355h1V302ZM371,315V355h1V315ZM375,341V355h1V341ZM378,341V355h1V341ZM379,289V355h1V289ZM380,315V355h1V315ZM381,302V355h1V302ZM382,341V355h1V341ZM391,328V355h1V328ZM396,315V355h1V315ZM397,315V355h1V315ZM398,289V355h1V289ZM399,315V355h1V315ZM400,315V355h1V315ZM401,315V355h1V315ZM402,328V355h1V328ZM403,328V355h1V328ZM405,328V355h1V328ZM406,341V355h1V341ZM407,341V355h1V341ZM410,315V355h1V315ZM411,315V355h1V315ZM412,276V355h1V276ZM413,315V355h1V315ZM414,315V355h1V315ZM415,302V355h1V302ZM416,315V355h1V315ZM417,328V355h1V328ZM418,328V355h1V328ZM419,328V355h1V328ZM420,315V355h1V315ZM421,328V355h1V328ZM422,328V355h1V328ZM423,328V355h1V328ZM424,328V355h1V328ZM426,315V355h1V315ZM427,315V355h1V315ZM428,315V355h1V315ZM429,328V355h1V328ZM430,328V355h1V328ZM431,328V355h1V328ZM432,328V355h1V328ZM433,315V355h1V315ZM434,289V355h1V289ZM435,315V355h1V315ZM436,289V355h1V289ZM437,315V355h1V315ZM438,315V355h1V315ZM439,341V355h1V341ZM440,341V355h1V341ZM441,341V355h1V341ZM442,341V355h1V341ZM443,341V355h1V341ZM444,341V355h1V341ZM445,328V355h1V328ZM447,289V355h1V289ZM448,289V355h1V289ZM449,276V355h1V276ZM450,289V355h1V289ZM451,289V355h1V289ZM453,328V355h1V328ZM454,328V355h1V328ZM455,328V355h1V328ZM457,276V355h1V276ZM458,263V355h1V263ZM459,328V355h1V328ZM460,328V355h1V328ZM461,315V355h1V315ZM462,276V355h1V276ZM464,276V355h1V276ZM465,263V355h1V263ZM466,276V355h1V276ZM467,341V355h1V341ZM468,341V355h1V341ZM469,341V355h1V341ZM470,341V355h1V341ZM476,328V355h1V328ZM477,328V355h1V328ZM478,328V355h1V328ZM479,302V355h1V302ZM480,341V355h1V341ZM481,341V355h1V341ZM482,341V355h1V341ZM484,263V355h1V263ZM485,263V355h1V263ZM486,263V355h1V263ZM488,289V355h1V289ZM489,289V355h1V289ZM490,328V355h1V328ZM491,328V355h1V328ZM492,341V355h1V341ZM493,341V355h1V341ZM494,341V355h1V341ZM496,302V355h1V302ZM497,341V355h1V341ZM498,341V355h1V341ZM499,341V355h1V341ZM500,341V355h1V341ZM501,315V355h1V315ZM502,315V355h1V315ZM503,315V355h1V315ZM504,315V355h1V315ZM505,302V355h1V302ZM506,341V355h1V341ZM509,341V355h1V341ZM510,341V355h1V341ZM511,341V355h1V341ZM512,341V355h1V341ZM514,341V355h1V341Z" fill="#ffff00"/>
<rect x="61" y="355" width="1" height="1" fill="#0000ff"/>
<rect x="72" y="355" width="1" height="1" fill="#0000ff"/>
<rect x="82" y="355" width="1" height="1" fill="#0000ff"/>
<rect x="93" y="355" width="1" height="1" fill="#0000ff"/>
<rect x="103" y="355" width="1" height="1" fill="#0000ff"/>
<rect x="113" y="355" width="1" height="1" fill="#0000ff"/>
<rect x="124" y="355" width="1" height="1" fill="#0000ff"/>
<rect x="134" y="355" width="1" height="1" fill="#0000ff"/>
<rect x="144" y="355" width="1" height="1" fill="#0000ff"/>
<rect x="155" y="355" width="1" height="1" fill="#0000ff"/>
<rect x="165" y="355" width="1" height="1" fill="#0000ff"/>
<rect x="176" y="355" width="1" height="1" fill="#0000ff"/>
<rect x="186" y="355" width="1" height="1" fill="#0000ff"/>
<rect x="196" y="355" width="1" height="1" fill="#0000ff"/>
<rect x="207" y="355" width="1" height="1" fill="#0000ff"/>
<rect x="217" y="355" width="1" height="1" fill="#0000ff"/>
<rect x="227" y="355" width="1" height="1" fill="#0000ff"/>
<rect x="238" y="355" width="1" height="1" fill="#0000ff"/>
<rect x="248" y="355" width="1" height="1" fill="#0000ff"/>
<rect x="259" y="355" width="1" height="1" fill="#0000ff"/>
<rect x="269" y="355" width="1" height="1" fill="#0000ff"/>
<rect x="279" y="355" width="1" height="1" fill="#0000ff"/>
<rect x="290" y="355" width="1" height="1" fill="#0000ff"/>
<rect x="300" y="355" width="1" height="1" fill="#0000ff"/>
<rect x="311" y="355" width="1" height="1" fill="#0000ff"/>
<rect x="321" y="355" width="1" height="1" fill="#0000ff"/>
<rect x="331" y="355" width="1" height="1" fill="#0000ff"/>
<rect x="342" y="355" width="1" height="1" fill="#0000ff"/>
<rect x="352" y="355" width="1" height="1" fill="#0000ff"/>
<rect x="362" y="355" width="1" height="1" fill="#0000ff"/>
<rect x="373" y="355" width="1" height="1" fill="#0000ff"/>
<rect x="383" y="355" width="1" height="1" fill="#0000ff"/>
<rect x="394" y="355" width="1" height="1" fill="#0000ff"/>
<rect x="404" y="355" width="1" height="1" fill="#0000ff"/>
<rect x="414" y="355" width="1" height="1" fill="#0000ff"/>
<rect x="425" y="355" width="1" height="1" fill="#0000ff"/>
<rect x="435" y="355" width="1" height="1" fill="#0000ff"/>
<rect x="445" y="355" width="1" height="1" fill="#0000ff"/>
<rect x="456" y="355" width="1" height="1" fill="#0000ff"/>
<rect x="466" y="355" width="1" height="1" fill="#0000ff"/>
<rect x="477" y="355" width="1" height="1" fill="#0000ff"/>
<rect x="487" y="355" width="1" height="1" fill="#0000ff"/>
<rect x="497" y="355" width="1" height="1" fill="#0000ff"/>
<rect x="508" y="355" width="1" height="1" fill="#0000ff"/>
<rect x="518" y="355" width="1" height="1" fill="#0000ff"/>
<rect x="529" y="355" width="1" height="1" fill="#0000ff"/>
<path d="M63.5,289.5L64.5,288.9L65.5,289.7L66.5,289.1L67.5,289.4L68.5,285.8L69.5,286.1L70.5,285.0L71.5,287.4L72.5,288.7L73.5,288.6L74.5,284.9L75.5,282.8L76.5,287.2L77.5,288.0L78.5,287.4L79.5,285.7L80.5,284.1L81.5,285.7L82.5,287.2L83.5,284.3L84.5,285.9L85.5,287.5L86.5,284.6L87.5,284.6L88.5,286.2L89.5,284.3L90.5,284.4L91.5,284.4L92.5,287.0L93.5,288.7L94.5,286.8L95.5,287.0L96.5,287.6L97.5,285.8L98.5,285.9L99.5,291.1L100.5,289.2L101.5,289.4L102.5,287.0L103.5,288.7L104.5,288.8L105.5,286.5L106.5,290.6L107.5,286.6L108.5,289.2L109.5,290.8L110.5,287.4L111.5,284.9L112.5,287.0L113.5,289.1L114.5,289.7L115.5,287.8L116.5,288.8L117.5,291.9L118.5,288.5L119.5,290.6L120.5,288.6L121.5,288.7L122.5,289.8L123.5,291.9L124.5,289.4L125.5,291.5L126.5,290.5L127.5,292.1L128.5,288.1L129.5,288.1L130.5,290.1L131.5,290.7L132.5,292.2L133.5,291.7L134.5,288.8L135.5,291.3L136.5,292.3L137.5,290.3L138.5,289.9L139.5,288.9L140.5,291.4L141.5,288.5L142.5,290.5L143.5,289.5L144.5,289.5L145.5,290.6L146.5,292.1L147.5,289.6L148.5,288.7L149.5,290.7L150.5,288.7L151.5,291.7L152.5,293.3L153.5,289.3L154.5,292.3L155.5,288.9L156.5,289.9L157.5,290.9L158.5,291.9L159.5,291.5L160.5,289.0L161.5,293.0L162.5,294.0L163.5,293.0L164.5,289.5L165.5,291.0L166.5,291.1L167.5,293.1L168.5,292.1L169.5,289.6L170.5,292.6L171.5,290.1L172.5,290.6L173.5,289.6L174.5,293.1L175.5,292.1L176.5,289.1L177.5,290.2L178.5,290.7L179.5,291.2L180.5,292.2L181.5,290.7L182.5,291.2L183.5,291.7L184.5,290.7L185.5,291.7L186.5,291.2L187.5,290.2L188.5,289.2L189.5,291.3L190.5,289.8L191.5,291.3L192.5,291.8L193.5,292.8L194.5,291.3L195.5,293.3L196.5,289.8L197.5,291.3L198.5,289.3L199.5,291.3L200.5,291.4L201.5,293.4L202.5,292.9L203.5,289.4L204.5,291.4L205.5,290.4L206.5,289.9L207.5,292.9L208.5,291.4L209.5,290.9L210.5,292.4L211.5,289.5L212.5,293.0L213.5,290.5L214.5,291.5L215.5,293.0L216.5,290.5L217.5,291.0L218.5,292.0L219.5,292.5L220.5,289.5L221.5,293.5L222.5,293.1L223.5,291.6L224.5,291.1L225.5,290.1L226.5,292.1L227.5,291.6L228.5,291.6L229.5,289.6L230.5,290.1L231.5,294.1L232.5,292.6L233.5,291.1L234.5,290.2L235.5,289.7L236.5,291.7L237.5,290.7L238.5,293.2L239.5,293.2L240.5,292.7L241.5,292.7L242.5,290.2L243.5,292.7L244.5,291.7L245.5,293.3L246.5,293.3L247.5,293.3L248.5,292.3L249.5,293.8L250.5,290.8L251.5,293.3L252.5,292.8L253.5,293.3L254.5,289.8L255.5,289.8L256.5,289.8L257.5,292.3L258.5,293.8L259.5,290.3L260.5,290.3L261.5,292.8L262.5,292.3L263.5,292.8L264.5,291.8L265.5,292.8L266.5,290.3L267.5,293.8L268.5,288.8L269.5,289.8L270.5,287.8L271.5,294.3L272.5,291.3L273.5,290.3L274.5,293.8L275.5,293.3L276.5,291.3L277.5,292.3L278.5,289.3L279.5,293.3L280.5,293.3L281.5,293.3L282.5,290.8L283.5,291.8L284.5,291.8L285.5,291.3L286.5,291.3L287.5,290.8L288.5,290.8L289.5,291.8L290.5,292.3L291.5,292.3L292.5,290.8L293.5,289.8L294.5,293.8L295.5,291.8L296.5,293.3L297.5,291.8L298.5,291.3L299.5,292.8L300.5,289.8L301.5,293.8L302.5,293.8L303.5,291.3L304.5,291.3L305.5,290.8L306.5,290.3L307.5,290.8L308.5,292.8L309.5,290.3L310.5,292.8L311.5,291.8L312.5,293.8L313.5,289.8L314.5,290.8L315.5,291.8L316.5,292.3L317.5,293.9L318.5,293.4L319.5,291.9L320.5,292.4L321.5,291.4L322.5,291.9L323.5,291.9L324.5,290.4L325.5,290.9L326.5,292.4L327.5,291.9L328.5,291.9L329.5,290.9L330.5,290.9L331.5,291.9L332.5,290.4L333.5,288.9L334.5,291.9L335.5,292.4L336.5,293.4L337.5,293.4L338.5,291.4L339.5,292.4L340.5,289.9L341.5,290.4L342.5,291.9L343.5,293.4L344.5,293.9L345.5,294.4L346.5,291.9L347.5,293.4L348.5,293.4L349.5,290.4L350.5,290.4L351.5,289.9L352.5,290.9L353.5,290.9L354.5,293.4L355.5,289.9L356.5,292.9L357.5,293.4L358.5,291.9L359.5,291.9L360.5,291.9L361.5,291.9L362.5,291.9L363.5,288.4L364.5,292.4L365.5,292.4L366.5,294.4L367.5,288.9L368.5,291.4L369.5,292.9L370.5,291.4L371.5,292.9L372.5,291.4L373.5,290.4L374.5,294.9L375.5,289.9L376.5,290.9L377.5,292.9L378.5,292.4L379.5,291.9L380.5,292.4L381.5,293.4L382.5,290.9L383.5,290.9L384.5,290.4L385.5,291.9L386.5,293.9L387.5,291.9L388.5,293.9L389.5,291.4L390.5,291.4L391.5,291.4L392.5,291.4L393.5,289.9L394.5,289.9L395.5,292.4L396.5,286.9L397.5,291.9L398.5,290.4L399.5,290.9L400.5,291.9L401.5,291.9L402.5,291.9L403.5,290.9L404.5,290.4L405.5,292.9L406.5,293.9L407.5,291.4L408.5,291.9L409.5,290.9L410.5,293.9L411.5,293.4L412.5,290.9L413.5,291.9L414.5,292.9L415.5,290.4L416.5,292.4L417.5,292.9L418.5,292.9L419.5,289.9L420.5,291.4L421.5,293.9L422.5,291.9L423.5,291.9L424.5,290.9L425.5,291.9L426.5,290.4L427.5,292.9L428.5,291.9L429.5,291.9L430.5,291.4L431.5,293.4L432.5,291.9L433.5,289.9L434.5,292.4L435.5,291.4L436.5,291.9L437.5,293.4L438.5,293.9L439.5,290.9L440.5,292.9L441.5,291.9L442.5,291.4L443.5,293.4L444.5,291.9L445.5,292.4L446.5,295.9L447.5,290.4L448.5,291.9L449.5,291.9L450.5,291.0L451.5,292.5L452.5,291.5L453.5,293.5L454.5,293.0L455.5,292.0L456.5,292.0L457.5,293.0L458.5,290.5L459.5,290.0L460.5,292.0L461.5,292.5L462.5,293.0L463.5,290.0L464.5,290.0L465.5,292.5L466.5,291.0L467.5,291.0L468.5,292.5L469.5,292.0L470.5,292.5L471.5,292.0L472.5,290.0L473.5,290.5L474.5,291.0L475.5,291.0L476.5,293.0L477.5,290.0L478.5,291.5L479.5,291.5L480.5,294.0L481.5,294.0L482.5,293.0L483.5,292.0L484.5,292.0L485.5,293.5L486.5,292.0L487.5,292.5L488.5,292.0L489.5,290.5L490.5,291.5L491.5,291.5L492.5,292.5L493.5,293.5L494.5,290.0L495.5,291.5L496.5,293.0L497.5,293.0L498.5,292.5L499.5,291.0L500.5,292.0L501.5,293.5L502.5,294.0L503.5,293.5L504.5,291.0L505.5,288.0L506.5,292.0L507.5,293.5L508.5,293.0L509.5,290.5L510.5,294.0L511.5,293.5L512.5,291.5L513.5,290.5L514.5,293.0L515.5,293.5" fill="none" stroke="#ff00ff" stroke-width="1.25" stroke-linejoin="round" shape-rendering="auto"/>
<rect x="516" y="224" width="1" height="131" fill="#c0c0c0"/>
</svg>
<div class="tx">
<span class="t" id="t0" style="top:8.4px;color:#000;font-size:13px;font-weight:bold;letter-spacing:0.609px;left:6.3px;">CD</span>
<span class="t" id="t1" style="top:8.4px;color:#000;font-size:13px;font-weight:bold;letter-spacing:0.097px;left:29.6px;">Speed</span>
<span class="t" id="t2" style="top:8.4px;color:#000;font-size:13px;font-weight:bold;letter-spacing:-0.544px;left:74.4px;">:</span>
<span class="t" id="t3" style="top:8.4px;color:#000;font-size:13px;font-weight:bold;letter-spacing:-0.117px;left:84.1px;">Disc</span>
<span class="t" id="t4" style="top:8.4px;color:#000;font-size:13px;font-weight:bold;letter-spacing:0.175px;left:116.4px;">Quality</span>
<span class="t" id="t5" style="top:8.4px;color:#000;font-size:13px;font-weight:bold;letter-spacing:0.659px;left:168.6px;">Test</span>
<span class="t" id="t6" style="top:8.4px;color:#000;font-size:13px;font-weight:bold;letter-spacing:1.856px;left:204.3px;">-</span>
<span class="t" id="t7" style="top:8.4px;color:#000;font-size:13px;font-weight:bold;letter-spacing:-0.616px;left:216.0px;">BENQ</span>
<span class="t" id="t8" style="top:8.4px;color:#000;font-size:13px;font-weight:bold;letter-spacing:-0.418px;left:272.3px;">DVD</span>
<span class="t" id="t9" style="top:8.4px;color:#000;font-size:13px;font-weight:bold;letter-spacing:-0.191px;left:303.5px;">DD</span>
<span class="t" id="t10" style="top:8.4px;color:#000;font-size:13px;font-weight:bold;letter-spacing:-0.013px;left:327.3px;">DW1620</span>
<span class="t" id="t11" style="top:8.4px;color:#000;font-size:13px;font-weight:bold;letter-spacing:-0.083px;left:399.3px;">B7S9</span>
<span class="t" id="t12" style="top:36.9px;color:#000;letter-spacing:-0.151px;left:22.3px;">Disc Quality</span>
<span class="t" id="t13" style="top:55.9px;color:#000;letter-spacing:-0.197px;left:272.3px;">recorded</span>
<span class="t" id="t14" style="top:55.9px;color:#000;letter-spacing:0.014px;left:319.7px;">with</span>
<span class="t" id="t15" style="top:55.9px;color:#000;letter-spacing:-0.879px;left:344.9px;">SONY</span>
<span class="t" id="t16" style="top:55.9px;color:#000;letter-spacing:-0.648px;left:392.4px;">DVD</span>
<span class="t" id="t17" style="top:55.9px;color:#000;letter-spacing:-1.291px;left:420.3px;">RW</span>
<span class="t" id="t18" style="top:55.9px;color:#000;letter-spacing:-0.354px;left:441.3px;">DRU-500A</span>
<span class="t" id="t19" style="top:55.9px;color:#000;letter-spacing:-0.532px;left:504.3px;">v2.1a</span>
<span class="t" id="t20" style="top:64.9px;color:#000;letter-spacing:-0.280px;right:688.3px;">50</span>
<span class="t" id="t21" style="top:91.9px;color:#000;letter-spacing:-0.280px;right:688.3px;">40</span>
<span class="t" id="t22" style="top:117.9px;color:#000;letter-spacing:-0.280px;right:688.3px;">30</span>
<span class="t" id="t23" style="top:143.9px;color:#000;letter-spacing:-0.280px;right:688.3px;">20</span>
<span class="t" id="t24" style="top:169.9px;color:#000;letter-spacing:-0.280px;right:688.3px;">10</span>
<span class="t" id="t25" style="top:64.9px;color:#000;letter-spacing:-0.580px;left:532.1px;">16</span>
<span class="t" id="t26" style="top:81.9px;color:#000;letter-spacing:-0.580px;left:532.1px;">14</span>
<span class="t" id="t27" style="top:97.9px;color:#000;letter-spacing:-0.580px;left:532.1px;">12</span>
<span class="t" id="t28" style="top:114.4px;color:#000;letter-spacing:-0.580px;left:532.1px;">10</span>
<span class="t" id="t29" style="top:130.9px;color:#000;letter-spacing:0.013px;left:532.1px;">8</span>
<span class="t" id="t30" style="top:146.9px;color:#000;letter-spacing:0.013px;left:532.1px;">6</span>
<span class="t" id="t31" style="top:163.4px;color:#000;letter-spacing:0.013px;left:532.1px;">4</span>
<span class="t" id="t32" style="top:179.9px;color:#000;letter-spacing:0.013px;left:532.1px;">2</span>
<span class="t" id="t33" style="top:214.9px;color:#000;letter-spacing:-0.280px;right:688.3px;">10</span>
<span class="t" id="t34" style="top:241.9px;color:#000;letter-spacing:0.212px;right:687.8px;">8</span>
<span class="t" id="t35" style="top:267.9px;color:#000;letter-spacing:0.212px;right:687.8px;">6</span>
<span class="t" id="t36" style="top:293.9px;color:#000;letter-spacing:0.212px;right:687.8px;">4</span>
<span class="t" id="t37" style="top:319.9px;color:#000;letter-spacing:0.212px;right:687.8px;">2</span>
<span class="t" id="t38" style="top:214.9px;color:#000;letter-spacing:-0.580px;left:532.1px;">20</span>
<span class="t" id="t39" style="top:241.9px;color:#000;letter-spacing:-0.580px;left:532.1px;">16</span>
<span class="t" id="t40" style="top:267.9px;color:#000;letter-spacing:-0.580px;left:532.1px;">12</span>
<span class="t" id="t41" style="top:293.9px;color:#000;letter-spacing:0.013px;left:532.1px;">8</span>
<span class="t" id="t42" style="top:319.9px;color:#000;letter-spacing:0.013px;left:532.1px;">4</span>
<span class="t" id="t43" style="top:205.4px;color:#000;letter-spacing:-0.763px;left:43.6px;width:40px;text-align:center;">0.0</span>
<span class="t" id="t44" style="top:355.7px;color:#000;letter-spacing:-0.763px;left:43.6px;width:40px;text-align:center;">0.0</span>
<span class="t" id="t45" style="top:205.4px;color:#000;letter-spacing:-0.763px;left:94.9px;width:40px;text-align:center;">0.5</span>
<span class="t" id="t46" style="top:355.7px;color:#000;letter-spacing:-0.763px;left:94.9px;width:40px;text-align:center;">0.5</span>
<span class="t" id="t47" style="top:205.4px;color:#000;letter-spacing:-0.763px;left:146.8px;width:40px;text-align:center;">1.0</span>
<span class="t" id="t48" style="top:355.7px;color:#000;letter-spacing:-0.763px;left:146.8px;width:40px;text-align:center;">1.0</span>
<span class="t" id="t49" style="top:205.4px;color:#000;letter-spacing:-0.763px;left:198.7px;width:40px;text-align:center;">1.5</span>
<span class="t" id="t50" style="top:355.7px;color:#000;letter-spacing:-0.763px;left:198.7px;width:40px;text-align:center;">1.5</span>
<span class="t" id="t51" style="top:205.4px;color:#000;letter-spacing:-0.763px;left:250.6px;width:40px;text-align:center;">2.0</span>
<span class="t" id="t52" style="top:355.7px;color:#000;letter-spacing:-0.763px;left:250.6px;width:40px;text-align:center;">2.0</span>
<span class="t" id="t53" style="top:205.4px;color:#000;letter-spacing:-0.763px;left:302.5px;width:40px;text-align:center;">2.5</span>
<span class="t" id="t54" style="top:355.7px;color:#000;letter-spacing:-0.763px;left:302.5px;width:40px;text-align:center;">2.5</span>
<span class="t" id="t55" style="top:205.4px;color:#000;letter-spacing:-0.763px;left:354.4px;width:40px;text-align:center;">3.0</span>
<span class="t" id="t56" style="top:355.7px;color:#000;letter-spacing:-0.763px;left:354.4px;width:40px;text-align:center;">3.0</span>
<span class="t" id="t57" style="top:205.4px;color:#000;letter-spacing:-0.763px;left:406.3px;width:40px;text-align:center;">3.5</span>
<span class="t" id="t58" style="top:355.7px;color:#000;letter-spacing:-0.763px;left:406.3px;width:40px;text-align:center;">3.5</span>
<span class="t" id="t59" style="top:205.4px;color:#000;letter-spacing:-0.763px;left:458.2px;width:40px;text-align:center;">4.0</span>
<span class="t" id="t60" style="top:355.7px;color:#000;letter-spacing:-0.763px;left:458.2px;width:40px;text-align:center;">4.0</span>
<span class="t" id="t61" style="top:205.4px;color:#000;letter-spacing:-0.763px;left:510.1px;width:40px;text-align:center;">4.5</span>
<span class="t" id="t62" style="top:355.7px;color:#000;letter-spacing:-0.763px;left:510.1px;width:40px;text-align:center;">4.5</span>
<span class="t" id="t63" style="top:60.4px;color:#000;letter-spacing:0.100px;left:582.3px;">開始</span>
<span class="t" id="t64" style="top:60.4px;color:#000;letter-spacing:0.037px;left:667.3px;">終了(<u>X</u>)</span>
<span class="t" id="t65" style="top:84.0px;color:#0000ff;letter-spacing:-3.625px;left:569.5px;">ディスク</span>
<span class="t" id="t66" style="top:84.0px;color:#0000ff;letter-spacing:-0.100px;left:604.5px;">情報</span>
<span class="t" id="t67" style="top:98.8px;color:#000;letter-spacing:-2.311px;left:568.4px;">タイプ:</span>
<span class="t" id="t68" style="top:99.0px;color:#00008c;letter-spacing:0.280px;left:616.3px;">DVD-R</span>
<span class="t" id="t69" style="top:113.8px;color:#000;letter-spacing:0.052px;left:568.0px;">ID:</span>
<span class="t" id="t70" style="top:113.8px;color:#00008c;letter-spacing:-0.457px;left:616.3px;">ProdiscS03</span>
<span class="t" id="t71" style="top:128.9px;color:#000;letter-spacing:0.385px;left:568.0px;">日付:</span>
<span class="t" id="t72" style="top:128.9px;color:#00008c;letter-spacing:-0.349px;left:616.3px;">1 March 2005</span>
<span class="t" id="t73" style="top:144.2px;color:#000;letter-spacing:-0.567px;left:568.0px;">Label:</span>
<span class="t" id="t74" style="top:144.2px;color:#00008c;letter-spacing:-0.939px;left:616.3px;">CDS_TEST_B2</span>
<span class="t" id="t75" style="top:164.9px;color:#0000ff;letter-spacing:-0.082px;left:568.8px;">Settings</span>
<span class="t" id="t76" style="top:185.6px;color:#000;letter-spacing:0.175px;left:568.0px;">転送速度</span>
<span class="t" id="t77" style="top:186.9px;color:#000;letter-spacing:0.300px;left:633.7px;">最大</span>
<span class="t" id="t78" style="top:211.6px;color:#000;letter-spacing:0.050px;left:568.0px;">開始</span>
<span class="t" id="t79" style="top:209.9px;color:#000;letter-spacing:-0.262px;left:632.9px;">0000 MB</span>
<span class="t" id="t80" style="top:234.2px;color:#000;letter-spacing:0.175px;left:568.0px;">終了位置</span>
<span class="t" id="t81" style="top:233.2px;color:#000;letter-spacing:-0.262px;left:632.9px;">4489 MB</span>
<span class="t" id="t82" style="top:253.9px;color:#000;letter-spacing:-0.352px;left:584.3px;">Show C1/PIE</span>
<span class="t" id="t83" style="top:270.8px;color:#000;letter-spacing:-0.291px;left:584.3px;">Show C2/PIF</span>
<span class="t" id="t84" style="top:287.0px;color:#000;letter-spacing:-0.087px;left:584.3px;">Show Jitter</span>
<span class="t" id="t85" style="top:304.1px;color:#000;letter-spacing:-0.525px;left:584.3px;">Show Read Speed</span>
<span class="t" id="t86" style="top:320.3px;color:#000;letter-spacing:-0.436px;left:584.3px;">Show Write Speed</span>
<span class="t" id="t87" style="top:348.1px;color:#000;letter-spacing:0.350px;left:568.0px;">品質</span>
<span class="t" id="t88" style="top:348.1px;color:#000;letter-spacing:-2.486px;left:591.1px;">スコア:</span>
<span class="t" id="t89" style="top:348.1px;color:#00008c;letter-spacing:-0.280px;right:36.0px;">95</span>
<span class="t" id="t90" style="top:380.4px;color:#000;letter-spacing:-0.009px;left:568.0px;">進行状況:</span>
<span class="t" id="t91" style="top:380.4px;color:#00008c;letter-spacing:-0.746px;right:35.3px;">100 %</span>
<span class="t" id="t92" style="top:399.9px;color:#000;letter-spacing:-2.307px;left:568.0px;">ポジション:</span>
<span class="t" id="t93" style="top:399.9px;color:#00008c;letter-spacing:-0.276px;right:36.0px;">4488 MB</span>
<span class="t" id="t94" style="top:416.8px;color:#000;letter-spacing:0.385px;left:568.0px;">速度:</span>
<span class="t" id="t95" style="top:416.8px;color:#00008c;letter-spacing:-0.384px;right:35.0px;">8.32 X</span>
<span class="t" id="t96" style="top:366.3px;color:#000;letter-spacing:-0.227px;left:39.6px;">PI Errors</span>
<span class="t" id="t97" style="top:380.6px;color:#000;letter-spacing:-0.481px;left:26.6px;">平均:</span>
<span class="t" id="t98" style="top:380.6px;color:#00008c;letter-spacing:-0.528px;right:567.5px;">11.02</span>
<span class="t" id="t99" style="top:399.4px;color:#000;letter-spacing:-0.481px;left:26.6px;">最大:</span>
<span class="t" id="t100" style="top:399.4px;color:#00008c;letter-spacing:-0.330px;right:568.1px;">48</span>
<span class="t" id="t101" style="top:417.0px;color:#000;letter-spacing:-0.243px;left:26.6px;">合計 :</span>
<span class="t" id="t102" style="top:417.0px;color:#00008c;letter-spacing:-0.641px;right:567.6px;">143720</span>
<span class="t" id="t103" style="top:366.3px;color:#000;letter-spacing:-0.214px;left:219.9px;">PI Failures</span>
<span class="t" id="t104" style="top:380.6px;color:#000;letter-spacing:-0.481px;left:208.0px;">平均:</span>
<span class="t" id="t105" style="top:380.6px;color:#00008c;letter-spacing:-0.865px;right:387.0px;">0.41</span>
<span class="t" id="t106" style="top:399.4px;color:#000;letter-spacing:-0.481px;left:208.0px;">最大:</span>
<span class="t" id="t107" style="top:399.4px;color:#00008c;letter-spacing:-0.288px;right:386.4px;">8</span>
<span class="t" id="t108" style="top:417.0px;color:#000;letter-spacing:-0.243px;left:208.0px;">合計 :</span>
<span class="t" id="t109" style="top:417.0px;color:#00008c;letter-spacing:-0.726px;right:386.8px;">5250</span>
<span class="t" id="t110" style="top:366.3px;color:#000;letter-spacing:0.197px;left:401.0px;">Jitter</span>
<span class="t" id="t111" style="top:380.6px;color:#000;letter-spacing:-0.481px;left:388.0px;">平均:</span>
<span class="t" id="t112" style="top:380.6px;color:#00008c;letter-spacing:-0.927px;right:204.9px;">9.47 %</span>
<span class="t" id="t113" style="top:399.4px;color:#000;letter-spacing:-0.481px;left:388.0px;">最大:</span>
<span class="t" id="t114" style="top:399.4px;color:#00008c;letter-spacing:-0.927px;right:204.9px;">10.9 %</span>
<span class="t" id="t115" style="top:422.2px;color:#000;letter-spacing:-0.374px;left:388.8px;">PO Failures:</span>
<span class="t" id="t116" style="top:422.2px;color:#00008c;letter-spacing:-0.287px;right:205.1px;">0</span>
</div>
</body></html>
